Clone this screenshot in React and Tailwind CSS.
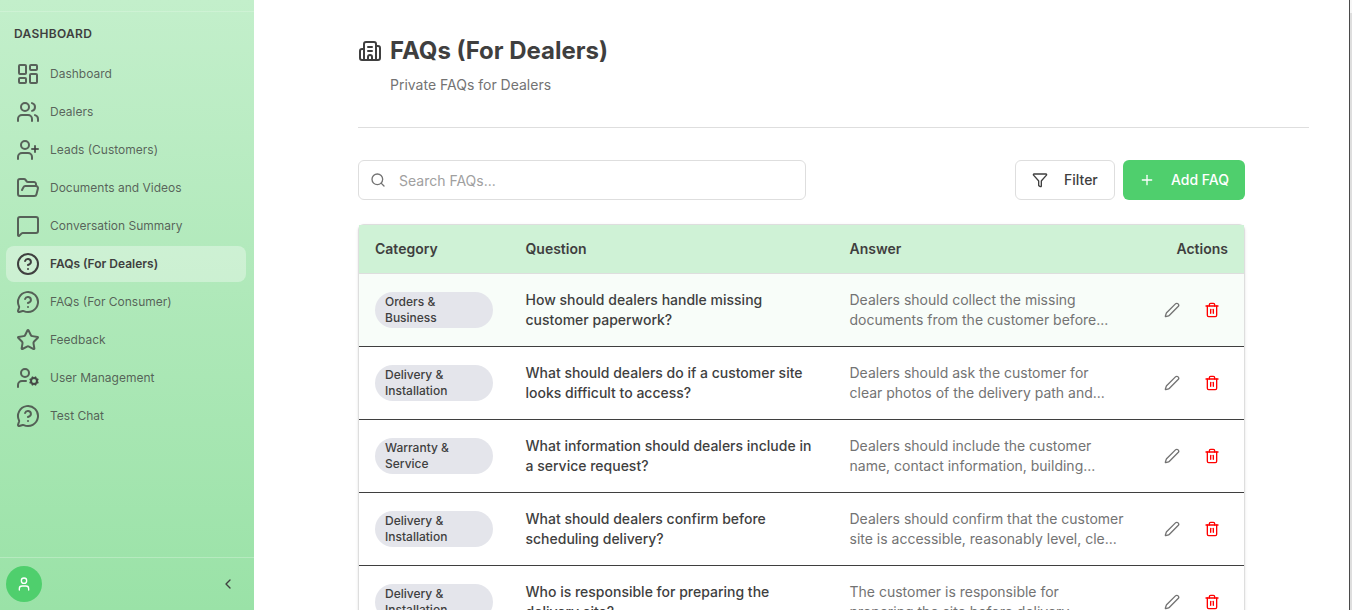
import React from "react";
import {
  Building2,
  ChevronLeft,
  CircleQuestionMark,
  FolderOpen,
  Funnel,
  LayoutDashboard,
  MessageCircleQuestionMark,
  MessageSquare,
  Pen,
  Plus,
  Search,
  Star,
  Trash2,
  User,
  UserCog,
  UserPlus,
  Users,
} from "lucide-react";

const navItems = [
  { label: "Dashboard", icon: LayoutDashboard },
  { label: "Dealers", icon: Users },
  { label: "Leads (Customers)", icon: UserPlus },
  { label: "Documents and Videos", icon: FolderOpen },
  { label: "Conversation Summary", icon: MessageSquare },
  { label: "FAQs (For Dealers)", icon: CircleQuestionMark, active: true },
  { label: "FAQs (For Consumer)", icon: MessageCircleQuestionMark },
  { label: "Feedback", icon: Star },
  { label: "User Management", icon: UserCog },
  { label: "Test Chat", icon: MessageCircleQuestionMark },
];

const faqs = [
  {
    category: ["Orders &", "Business"],
    question: ["How should dealers handle missing", "customer paperwork?"],
    answer: ["Dealers should collect the missing", "documents from the customer before..."],
    highlighted: true,
  },
  {
    category: ["Delivery &", "Installation"],
    question: ["What should dealers do if a customer site", "looks difficult to access?"],
    answer: ["Dealers should ask the customer for", "clear photos of the delivery path and..."],
  },
  {
    category: ["Warranty &", "Service"],
    question: ["What information should dealers include in", "a service request?"],
    answer: ["Dealers should include the customer", "name, contact information, building..."],
  },
  {
    category: ["Delivery &", "Installation"],
    question: ["What should dealers confirm before", "scheduling delivery?"],
    answer: ["Dealers should confirm that the customer", "site is accessible, reasonably level, cle..."],
  },
  {
    category: ["Delivery &", "Installation"],
    question: ["Who is responsible for preparing the", "delivery site?"],
    answer: ["The customer is responsible for", "preparing the site before delivery..."],
  },
];

const Lines = ({ lines }) =>
  lines.map((line) => (
    <span key={line} className="block whitespace-nowrap">
      {line}
    </span>
  ));

const Sidebar = () => (
  <aside className="flex w-[254px] shrink-0 flex-col bg-linear-to-b from-[#c3efcb] to-[#9ae2a7]">
    <div className="h-3 shrink-0 border-b border-white/20" />
    <h2 className="mt-3 px-3.5 text-xs leading-5 font-semibold tracking-wide">DASHBOARD</h2>
    <nav className="mt-3 flex flex-1 flex-col gap-0.5 pr-2 pl-1.5">
      {navItems.map(({ label, icon: Icon, active }) => (
        <a
          key={label}
          className={`flex h-9 items-center gap-2.5 rounded-lg px-2.5 text-xs ${
            active ? "bg-white/35 font-semibold text-[#3f3f3f]" : "text-[#3f3f3f]/80"
          }`}
        >
          <Icon size={24} strokeWidth={2} />
          {label}
        </a>
      ))}
    </nav>
    <div className="flex h-[53px] shrink-0 items-center justify-between border-t border-white/25 pr-2 pl-1.5">
      <div className="flex size-9 items-center justify-center rounded-full bg-[#4fcf6d] text-white">
        <User size={16} strokeWidth={2} />
      </div>
      <ChevronLeft size={16} className="mr-2.5" />
    </div>
  </aside>
);

const FaqRow = ({ faq }) => (
  <div
    className={`flex h-[73px] items-center border-b border-[#3f3f3f] ${
      faq.highlighted ? "bg-[#f8fdf9]" : "bg-white"
    }`}
  >
    <div className="w-[150.5px] shrink-0 pl-4">
      <div className="w-[118px] rounded-full bg-[#e4e5eb] px-2.5 py-0.5 text-xs font-medium">
        <Lines lines={faq.category} />
      </div>
    </div>
    <div className="w-[324px] shrink-0 pl-4 text-sm leading-5 font-medium">
      <Lines lines={faq.question} />
    </div>
    <div className="w-[290px] shrink-0 pl-4 text-sm leading-5 text-[#737373]">
      <Lines lines={faq.answer} />
    </div>
    <div className="flex flex-1 justify-end gap-6 pr-6">
      <Pen size={16} className="text-[#737373]" />
      <Trash2 size={16} className="text-[#ff0000]" />
    </div>
  </div>
);

const App = () => {
  return (
    <div className="flex h-[610px] w-[1352px] overflow-hidden bg-white font-['Inter',sans-serif] text-[#3f3f3f]">
      <Sidebar />

      <main className="min-w-0 flex-1 overflow-hidden pl-[104px]">
        <header className="flex h-32 w-[951px] gap-2 border-b border-[#dedede] pt-[35px]">
          <Building2 size={24} className="mt-1 shrink-0" />
          <div>
            <h1 className="text-2xl leading-8 font-bold">FAQs (For Dealers)</h1>
            <p className="mt-2 text-sm leading-5 text-[#737373]">Private FAQs for Dealers</p>
          </div>
        </header>

        <div className="w-[887px] pt-8">
          <div className="flex justify-between">
            <div className="flex h-10 w-[448px] items-center gap-[13px] rounded-md border border-[#dedede] px-[11px] text-sm text-[#a0a0a0]">
              <Search size={16} className="text-[#737373]" />
              <span className="pt-0.5">Search FAQs...</span>
            </div>
            <div className="flex gap-2 text-sm font-medium">
              <button className="flex h-10 w-[100px] items-center gap-4 rounded-md border border-[#dedede] px-4">
                <Funnel size={16} />
                Filter
              </button>
              <button className="flex h-10 w-[122px] items-center gap-4 rounded-md bg-[#4fcf6d] px-4 text-white">
                <Plus size={16} />
                Add FAQ
              </button>
            </div>
          </div>

          <div className="mt-6 rounded-md border border-[#dedede] shadow-sm">
            <div className="flex h-[49px] items-center border-b border-[#dedede] bg-[#cff2d6] text-sm font-semibold">
              <span className="w-[150.5px] pl-4">Category</span>
              <span className="w-[324px] pl-4">Question</span>
              <span className="w-[290px] pl-4">Answer</span>
              <span className="flex-1 pr-4 text-right">Actions</span>
            </div>
            {faqs.map((faq, i) => (
              <FaqRow key={i} faq={faq} />
            ))}
          </div>
        </div>
      </main>

      <div className="flex w-[3px] shrink-0 flex-col border-l border-[#4a4a4a] bg-[#dedede]">
        <div className="h-[13px] bg-[#f5f5f5]" />
      </div>
    </div>
  );
};

export default App;
